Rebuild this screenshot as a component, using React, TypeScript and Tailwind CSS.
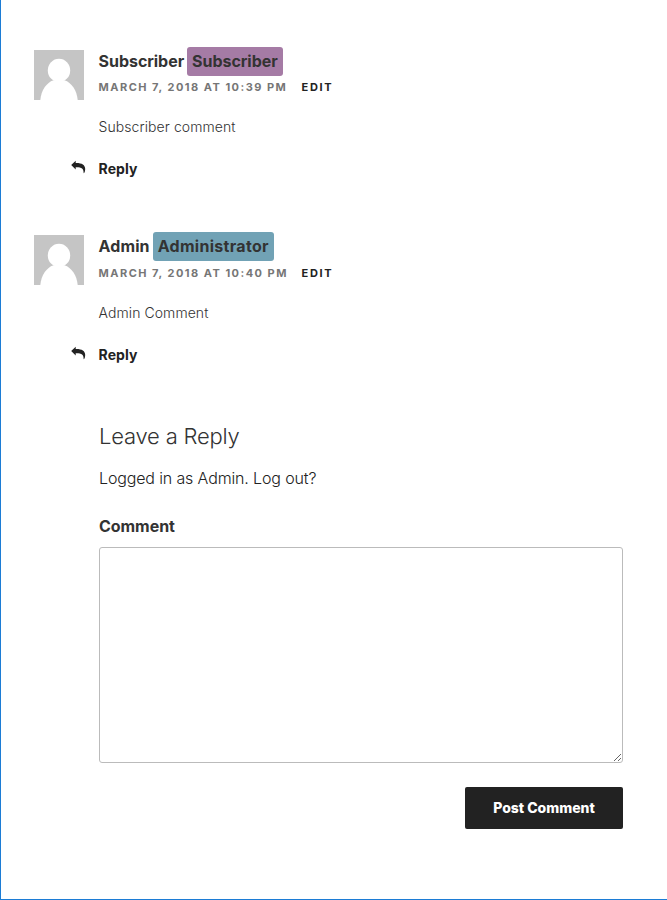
import React from "react";

type CommentProps = {
  author: string;
  role: string;
  badgeClass: string;
  nameClass: string;
  metaClass: string;
  date: string;
  text: string;
};

function Avatar() {
  return (
    <svg className="mt-[3px] h-[50px] w-[50px] shrink-0" viewBox="0 0 50 50">
      <rect width="50" height="50" fill="#c5c5c5" />
      <ellipse cx="25" cy="20.4" rx="11.2" ry="11.6" fill="#fff" />
      <path d="M6.3 50C7.2 40 12.5 32.5 19.5 30.2H30.5C37.5 32.5 42.8 40 43.7 50Z" fill="#fff" />
    </svg>
  );
}

function ReplyIcon() {
  return (
    <svg className="mt-[3px] h-[14px] w-[15px]" viewBox="0 0 15 14">
      <path
        d="M0.2 4.9L4.7 0.7V3.1C10.6 2.9 14.2 5 14.2 9C14.2 10.6 13.9 12 13.2 13.1C12.9 13.4 12.6 13.2 12.6 12.8C12.8 8.6 10.4 7 4.7 7.2V9.4Z"
        fill="#222"
      />
    </svg>
  );
}

function Comment(p: CommentProps) {
  return (
    <article className="flex h-[136px] gap-[14.6px]">
      <Avatar />
      <div className="flex flex-col items-start">
        <div className={"flex h-[29px] items-center gap-[3px] text-[16px] leading-[29px] font-bold text-[#333] " + p.nameClass}>
          <span>{p.author}</span>
          <span className={"rounded-[3px] px-[5px] " + p.badgeClass}>{p.role}</span>
        </div>
        <div className={"flex h-[17px] items-center gap-[13px] text-[11px] leading-[17px] font-bold whitespace-nowrap " + p.metaClass}>
          <span className="w-[190px] tracking-[1.48px] text-[#767676]">{p.date}</span>
          <span className="tracking-[1.65px] text-[#222]">EDIT</span>
        </div>
        <p className="mt-[19px] text-[14px] leading-[24px] font-light tracking-[0.07px] text-[#333]">{p.text}</p>
        <div className="mt-[18px] -ml-[28px] flex gap-[13px] text-[14px] leading-[24px] font-bold text-[#222]">
          <ReplyIcon />
          <span className="tracking-[0.05px]">Reply</span>
        </div>
      </div>
    </article>
  );
}

export default function App() {
  return (
    <main className="h-[900px] w-[667px] border-b border-l border-[#1c7cd5] bg-white pt-[47px] pr-[44px] pl-[33px] font-['Inter','Liberation_Sans',sans-serif]">
      <Comment
        author="Subscriber"
        role="Subscriber"
        badgeClass="bg-[#a57ba5]"
        nameClass="tracking-[-0.05px]"
        metaClass="mt-[3px]"
        date="MARCH 7, 2018 AT 10:39 PM"
        text="Subscriber comment"
      />
      <div className="mt-[49px]">
        <Comment
          author="Admin"
          role="Administrator"
          badgeClass="bg-[#71a2b5] tracking-[0.3px]"
          nameClass="tracking-[0.1px]"
          metaClass="mt-[4px]"
          date="MARCH 7, 2018 AT 10:40 PM"
          text="Admin Comment"
        />
      </div>
      <section className="mt-[52px] flex flex-col items-start pl-[65px] text-[#333]">
        <h2 className="text-[22px] leading-[32px] font-light tracking-[-0.2px]">Leave a Reply</h2>
        <p className="mt-[14px] text-[16px] leading-[24px] font-[350] tracking-[-0.14px] text-[#222]">Logged in as Admin. Log out?</p>
        <label className="mt-[24px] text-[16px] leading-[24px] font-bold tracking-[-0.05px]" htmlFor="comment">
          Comment
        </label>
        <textarea id="comment" className="mt-[9px] block h-[216px] w-[524px] resize rounded-[3px] border border-[#bbb] bg-white" />
        <button className="mt-[24px] h-[42px] w-[158px] self-end rounded-[2px] bg-[#222] pb-[2px] text-[14px] font-extrabold tracking-[-0.02px] text-white">
          Post Comment
        </button>
      </section>
    </main>
  );
}
